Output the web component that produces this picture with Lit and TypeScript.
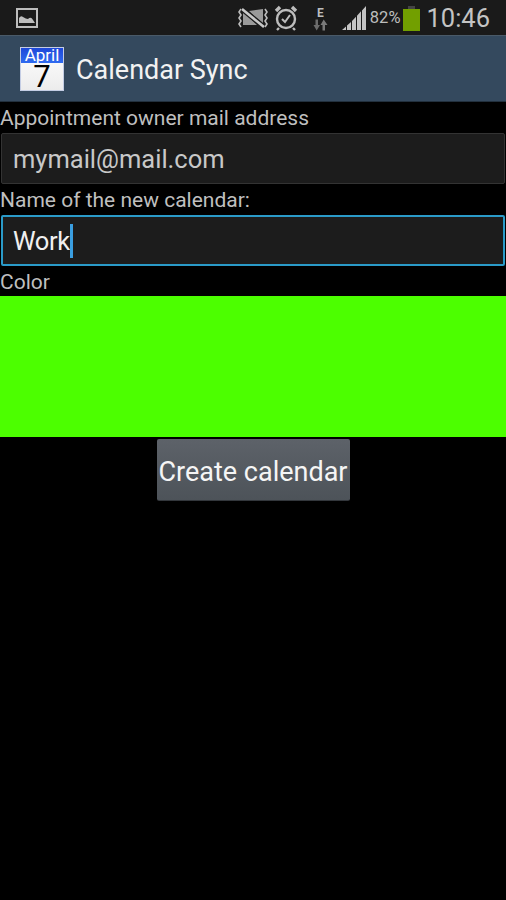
import { LitElement, html, css } from "lit";
import { customElement } from "lit/decorators.js";

@customElement("app-root")
export class AppRoot extends LitElement {
  static styles = css`
    :host { display: block; width: 506px; height: 900px; background: #000; font-family: Roboto, "Liberation Sans", sans-serif; overflow: hidden; }
    .status { height: 35px; background: #1a1a1a; display: flex; align-items: center; padding: 0 16px; color: #bdbdbd; box-sizing: border-box; }
    .status svg { display: block; flex: none; }
    .pic { margin-right: auto; }
    .mute { margin-right: 6px; }
    .alarm { margin-right: 12px; }
    .net { margin-right: 14px; }
    .signal { margin-top: 1px; }
    .batt { margin-top: 2px; }
    .pct { font-size: 16.5px; margin: 0 3px 0 4px; color: #bdbdbd; }
    .time { font-size: 25.5px; margin-left: 6px; color: #c4c4c4; }
    .bar { height: 67px; box-sizing: border-box; background: #34495e; border-top: 1px solid #4a5a68; border-bottom: 1px solid #22303d; display: flex; align-items: center; padding-left: 20px; gap: 12px; }
    .title { color: #f2f2f2; font-size: 27px; padding-top: 2px; }
    .cal { width: 44px; height: 44px; background: linear-gradient(#fff, #ececec); display: flex; flex-direction: column; align-items: center; color: #000; border: 1px solid #c4cde4; box-sizing: border-box; }
    .cal .m { width: 100%; height: 16px; background: linear-gradient(#1e48d8, #2f6bf0); color: #fff; font-size: 17px; line-height: 15px; text-align: center; }
    .cal .d { font-size: 31px; line-height: 27px; }
    .label { color: #bfbfbf; font-size: 21px; line-height: 32px; height: 31px; }
    .lab3 { height: 30px; }
    .input { height: 51px; box-sizing: border-box; margin: 0 1px; background: #1c1c1c; border: 1px solid #333; border-radius: 2px; padding-left: 11px; display: flex; align-items: center; font-size: 25.5px; color: #c8c8c8; }
    .input.focus { border: 2px solid #2a9ac8; color: #f0f0f0; padding-left: 10px; letter-spacing: -0.4px; }
    .caret { flex: none; width: 3px; height: 34px; background: #3a9ee0; margin-left: 0; }
    .color { height: 141px; background: #4cff00; }
    .row { display: flex; justify-content: center; padding-top: 2px; }
    .btn { width: 193px; height: 62px; box-sizing: border-box; background: linear-gradient(#5d6269, #4d5359); border-radius: 2px; border-bottom: 1px solid #33373c; color: #f5f5f5; font-size: 27px; padding-top: 4px; display: flex; align-items: center; justify-content: center; white-space: nowrap; }
  `;

  render() {
    return html`
      <div class="status">
        <svg class="pic" width="22" height="20" viewBox="0 0 22 20" fill="none"><rect x="1" y="1" width="20" height="18" stroke="#bdbdbd" stroke-width="2"/><path d="M3 15 L3 10 Q5 7 7 9 Q10 11 12 11 Q15 8 17 12 L19 15 Z" fill="#bdbdbd"/></svg>
        <svg class="mute" width="30" height="20" viewBox="0 0 30 20" fill="none" stroke="#bdbdbd"><path d="M3 1 L1 4 L3 7 L1 10 L3 13 L1 16 L3 19" stroke-width="1.6"/><path d="M5 3 L5 17 L19 17 Z" fill="#9a9a9a" stroke="none"/><path d="M11 3 L25 1 L25 16 Z" fill="#9a9a9a" stroke="none"/><path d="M4 1 L26 19" stroke="#1a1a1a" stroke-width="5"/><path d="M4 1 L26 19" stroke="#c8c8c8" stroke-width="2.6"/><path d="M27 1 L29 4 L27 7 L29 10 L27 13 L29 16 L27 19" stroke-width="1.6"/></svg>
        <svg class="alarm" width="24" height="26" viewBox="0 0 24 26" fill="none" stroke="#bdbdbd" stroke-width="2.4"><circle cx="12" cy="14" r="9"/><path d="M8 14 L11 17 L16 10" stroke-width="2"/><path d="M2 6 L6 2 M22 6 L18 2" stroke-width="3.4"/><path d="M5 23 L3 25 M19 23 L21 25"/></svg>
        <svg class="net" width="18" height="26" viewBox="0 0 18 26"><text x="7" y="12" font-size="12" font-weight="700" font-family="Roboto, sans-serif" fill="#bdbdbd">E</text><path d="M5.5 14.5 L8 14.5 L8 20 L10 20 L6.7 25.5 L3.5 20 L5.5 20 Z" fill="#6c6c6c"/><path d="M12.5 25.5 L15 25.5 L15 20 L17.5 20 L13.7 14.5 L10.5 20 L12.5 20 Z" fill="#7a7a7a"/></svg>
        <svg class="signal" width="24" height="24" viewBox="0 0 24 27" preserveAspectRatio="none" fill="#c4c4c4"><path d="M0 27 L4 23 L4 27 Z M5 22 L9 18 L9 27 L5 27 Z M10 17 L14 12 L14 27 L10 27 Z M15 11 L19 6 L19 27 L15 27 Z M20 5 L24 0 L24 27 L20 27 Z"/></svg>
        <span class="pct">82%</span>
        <svg class="batt" width="17" height="25" viewBox="0 0 17 25"><rect x="5" y="0" width="7" height="3" fill="#444"/><rect x="0" y="3" width="17" height="22" fill="#729f00"/></svg>
        <span class="time">10:46</span>
      </div>
      <div class="bar">
        <div class="cal"><div class="m">April</div><div class="d">7</div></div>
        <div class="title">Calendar Sync</div>
      </div>
      <div class="label">Appointment owner mail address</div>
      <div class="input">mymail@mail.com</div>
      <div class="label">Name of the new calendar:</div>
      <div class="input focus">Work<span class="caret"></span></div>
      <div class="label lab3">Color</div>
      <div class="color"></div>
      <div class="row"><div class="btn">Create calendar</div></div>
    `;
  }
}
